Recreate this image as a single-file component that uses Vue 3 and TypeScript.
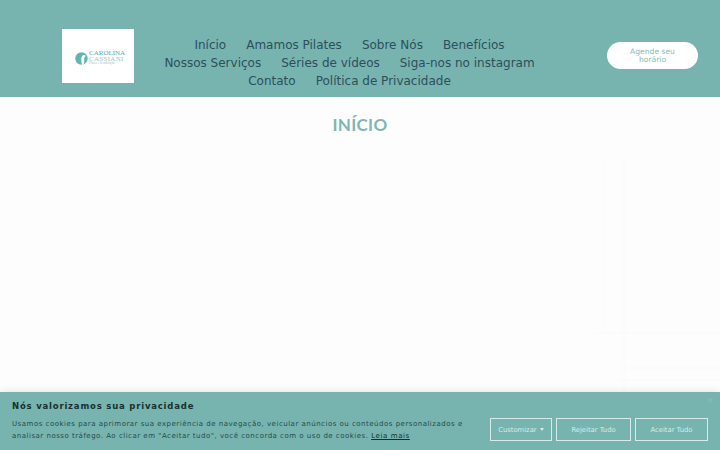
<script setup lang="ts">
const navRows: string[][] = [
  ['Início', 'Amamos Pilates', 'Sobre Nós', 'Benefícios'],
  ['Nossos Serviços', 'Séries de vídeos', 'Siga-nos no instagram'],
  ['Contato', 'Política de Privacidade'],
]
</script>

<template>
  <div class="page">
    <header class="header">
      <div class="logo">
        <svg class="mark" width="13" height="13" viewBox="0 0 13 13" aria-hidden="true">
          <circle cx="6.500" cy="6.500" r="6.200" fill="#5fb5b2" />
          <path d="M7 13 C6 10 6 6 7 4 C8 2.800 10 2.800 11 4 C9.500 4.500 9 6 9.200 8 C9.400 10 9 12 8 13 Z" fill="#fff" />
        </svg>
        <div class="logo-text">
          <span class="l1">CAROLINA</span>
          <span class="l2">CASSIANI</span>
          <span class="l3">Pilates e Reabilitação</span>
        </div>
      </div>
      <nav class="nav">
        <div v-for="(row, i) in navRows" :key="i" class="nav-row">
          <a v-for="item in row" :key="item">{{ item }}</a>
        </div>
      </nav>
      <a class="cta">Agende seu<br />horário</a>
    </header>
    <main class="main">
      <svg class="ghost" width="125" height="250" viewBox="0 0 125 250" aria-hidden="true">
        <g fill="none" stroke="#fbfbfb" stroke-width="2">
          <path d="M9 0 V172 M29 0 V250 M0 175 H125" />
          <path d="M24 210 H125 M24 222 H125" />
        </g>
      </svg>
      <h1 class="title">INÍCIO</h1>
    </main>
    <section class="cookie">
      <span class="close">×</span>
      <h2 class="cookie-title">Nós valorizamos sua privacidade</h2>
      <div class="cookie-body">
        <p class="cookie-text">
          Usamos cookies para aprimorar sua experiência de navegação, veicular anúncios ou conteúdos personalizados e
          analisar nosso tráfego. Ao clicar em "Aceitar tudo", você concorda com o uso de cookies.
          <a class="more">Leia mais</a>
        </p>
        <div class="buttons">
          <button class="btn custom">Customizar <i class="caret"></i></button>
          <button class="btn reject">Rejeitar Tudo</button>
          <button class="btn accept">Aceitar Tudo</button>
        </div>
      </div>
    </section>
  </div>
</template>

<style>
html, body { margin: 0; background: #fdfdfd; }
</style>

<style scoped>
.page {
  width: 720px;
  height: 450px;
  position: relative;
  overflow: hidden;
  background: #fdfdfd;
  font-family: "DejaVu Sans", sans-serif;
}
.header {
  height: 97px;
  box-sizing: border-box;
  background: #78b4af;
  display: flex;
  align-items: flex-start;
  padding: 29px 22px 0 62px;
}
.logo {
  width: 72px;
  height: 54px;
  flex: none;
  background: #fff;
  display: flex;
  align-items: center;
  gap: 1px;
  padding: 4px 0 0 13px;
  box-sizing: border-box;
}
.mark { flex: none; }
.logo-text {
  display: flex;
  flex-direction: column;
  font-family: "Liberation Serif", serif;
  line-height: 5.500px;
  color: #5fb5b2;
  white-space: nowrap;
}
.l1 { font-size: 7px; color: #5aa6a6; }
.l2 { font-size: 7px; color: #a5bcbb; letter-spacing: 0.300px; }
.l3 { font-size: 3px; line-height: 3px; color: #a8bcbc; }
.nav {
  width: 431px;
  flex: none;
  padding-top: 7px;
}
.nav-row {
  display: flex;
  justify-content: center;
  gap: 20px;
  font-size: 12px;
  line-height: 18px;
  color: #2b4f5c;
}
.cta {
  flex: none;
  width: 91px;
  height: 27px;
  margin-top: 13px;
  margin-left: auto;
  border-radius: 14px;
  background: #fff;
  color: #84bcb8;
  font-size: 7.600px;
  line-height: 7.500px;
  text-align: center;
  display: flex;
  align-items: center;
  justify-content: center;
}
.main { text-align: center; position: relative; }
.ghost { position: absolute; top: 45px; right: 0; }
.title {
  position: relative;
  margin: 16px 0 0;
  font-family: Lato, sans-serif;
  font-size: 17px;
  line-height: 24px;
  font-weight: 700;
  letter-spacing: 0.300px;
  color: #7fb6b1;
}
.cookie {
  position: absolute;
  left: 0;
  right: 0;
  bottom: 0;
  height: 58px;
  box-sizing: border-box;
  background: #78b4af;
  padding: 8px 12px 0;
  box-shadow: 0 0 8px rgba(0, 0, 0, 0.12);
}
.close {
  position: absolute;
  top: 3px;
  right: 6px;
  font-size: 9px;
  line-height: 10px;
  color: #8fbcb8;
}
.cookie-title {
  margin: 0;
  font-size: 8.500px;
  line-height: 12px;
  font-weight: 700;
  letter-spacing: 0.800px;
  color: #16302f;
}
.cookie-body {
  display: flex;
  justify-content: space-between;
  align-items: flex-start;
  margin-top: 6px;
}
.cookie-text {
  margin: 0;
  width: 470px;
  font-size: 7px;
  line-height: 12px;
  letter-spacing: 0.500px;
  color: #234b4a;
}
.more { color: #16302f; text-decoration: underline; letter-spacing: 0.600px; }
.buttons { display: flex; gap: 4px; }
.btn {
  height: 23px;
  box-sizing: border-box;
  padding: 0;
  background: transparent;
  border: 1.500px solid #d5ecea;
  color: #d5ecea;
  font-family: "DejaVu Sans", sans-serif;
  font-size: 6.800px;
}
.custom { width: 62px; }
.reject { width: 75px; }
.accept { width: 73px; }
.caret {
  display: inline-block;
  width: 0;
  height: 0;
  margin-left: 1px;
  vertical-align: 1px;
  border-left: 2.500px solid transparent;
  border-right: 2.500px solid transparent;
  border-top: 3px solid #d5ecea;
}
</style>
